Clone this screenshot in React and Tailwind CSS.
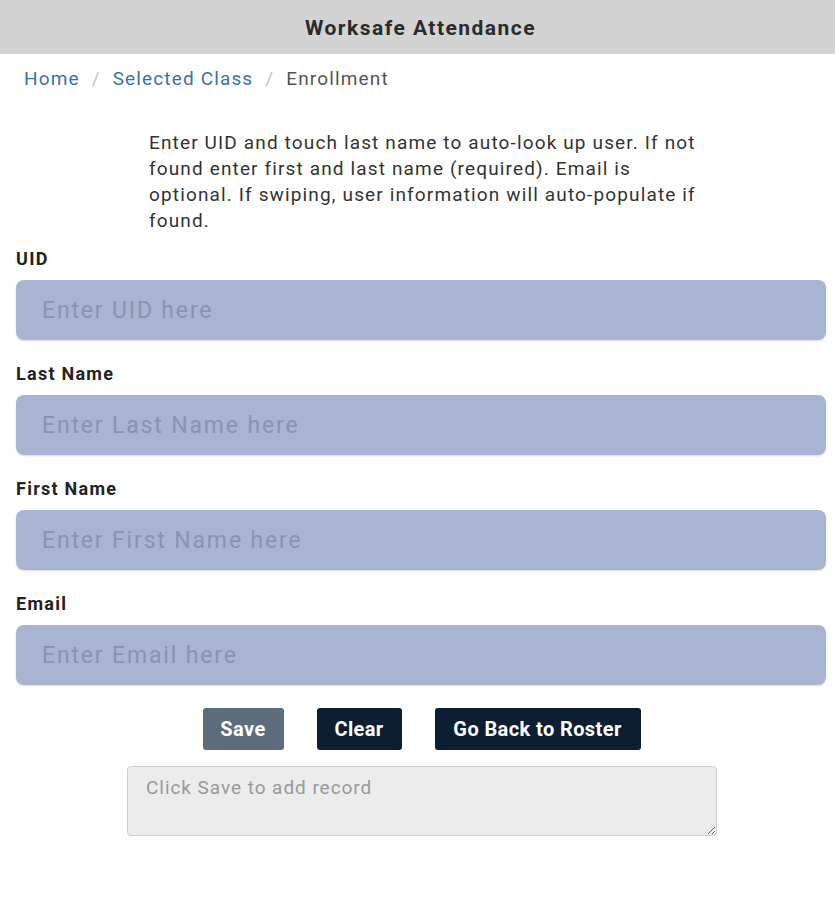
import { useState } from 'react';

const fields = [
  { key: 'uid', label: 'UID', placeholder: 'Enter UID here' },
  { key: 'last', label: 'Last Name', placeholder: 'Enter Last Name here' },
  { key: 'first', label: 'First Name', placeholder: 'Enter First Name here' },
  { key: 'email', label: 'Email', placeholder: 'Enter Email here' },
];

export default function App() {
  const [values, setValues] = useState({ uid: '', last: '', first: '', email: '' });

  return (
    <div className="min-h-[900px] bg-white font-['Roboto',sans-serif] text-[#333]">
      <header className="h-[54px] bg-[#d3d3d3] flex items-center justify-center pt-[3px]">
        <h1 className="text-[21px] font-bold tracking-[0.07em] text-[#2b2b2b] pl-1.5">Worksafe Attendance</h1>
      </header>

      {/* Breadcrumb */}
      <nav className="flex items-center gap-[12px] pl-6 pt-[13px] text-[19px] tracking-[0.06em] leading-6">
        <a className="text-[#3a70b0]">Home</a>
        <span className="text-[#c4c4c4]">/</span>
        <a className="text-[#3a70b0]">Selected Class</a>
        <span className="text-[#c4c4c4]">/</span>
        <span className="text-[#555]">Enrollment</span>
      </nav>

      <p className="w-[548px] ml-[149px] mt-[39px] text-[19px] tracking-[0.06em] leading-[26px] text-[#333]">
        Enter UID and touch last name to auto-look up user. If not found enter first and last name (required). Email is optional. If swiping, user information will auto-populate if found.
      </p>

      <div className="ml-4 mr-[9px] mt-[15px] flex flex-col">
        {fields.map(f => (
          <div key={f.key} className="mb-[24px]">
            <label className="block text-[18px] font-bold tracking-[0.07em] leading-5 text-[#222] mb-[11px]">{f.label}</label>
            <input
              value={values[f.key]}
              onChange={e => setValues({ ...values, [f.key]: e.target.value })}
              placeholder={f.placeholder}
              className="w-full h-[60px] rounded-lg bg-[#a9b4d2] px-[26px] text-[23px] tracking-[0.08em] text-[#333] placeholder:text-[#8a93ad] outline-none shadow-[0_1px_2px_rgba(0,0,0,0.15)]"
            />
          </div>
        ))}
      </div>

      <div className="flex justify-center gap-[33px] mt-[-1px] pl-[8px]">
        <button className="h-[42px] w-[81px] rounded-[3px] bg-[#5c6c7c] text-white text-[20px] tracking-[0.02em] font-bold">Save</button>
        <button className="h-[42px] w-[85px] rounded-[3px] bg-[#0b1e32] text-white text-[20px] tracking-[0.02em] font-bold">Clear</button>
        <button className="h-[42px] w-[206px] rounded-[3px] bg-[#0b1e32] text-white text-[20px] tracking-[0.02em] font-bold">Go Back to Roster</button>
      </div>

      <div className="flex justify-center mt-4 pl-[9px]">
        <textarea
          placeholder="Click Save to add record"
          className="w-[590px] h-[70px] rounded bg-[#ececec] border border-[#cfcfcf] px-[18px] py-[9px] text-[19px] tracking-[0.05em] leading-6 placeholder:text-[#999] outline-none"
        />
      </div>
    </div>
  );
}
